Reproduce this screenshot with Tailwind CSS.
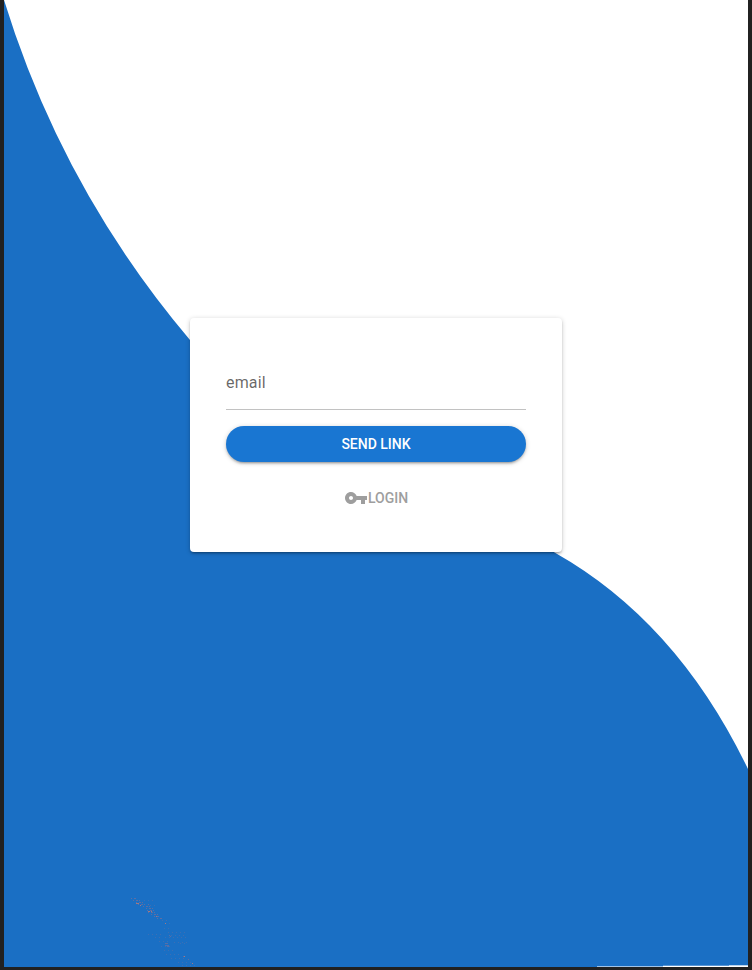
<!DOCTYPE html>
<html lang="en">
<head>
<meta charset="utf-8">
<title>Send link</title>
<script src="https://cdn.jsdelivr.net/npm/@tailwindcss/browser@4"></script>
</head>
<body class="relative h-[970px] w-[752px] overflow-hidden bg-[#212121] font-[Roboto,sans-serif]">
<svg class="absolute inset-0" width="752" height="970" viewBox="0 0 752 970" aria-hidden="true">
  <rect x="4" width="744" height="967" fill="#fff"/>
  <path fill="#1a6fc4" d="M4 0Q62.2 189 190 340L400 460L555 552.7Q677 621.5 748 769V967H4Z"/>
  <path fill="#9fc3e8" d="M597 966h66v1h-66z"/>
  <path fill="#5896d5" d="M663 965h66v1h-66z"/>
  <path fill="#b9d4ee" d="M729 965h19v1h-19z"/>
  <path fill="#fff" d="M663 966h85v1h-85z"/>
  <g stroke="#8b7090" stroke-opacity=".6" fill="none">
    <path stroke-dasharray="1 2 2 1 1 3" d="M131 898.5h5M133 900.5h8M136 902.5h8M138 904.5h11M143 906.5h10M146 908.5h8M147 910.5h9M148 912.5h10M151 914.5h8M154 916.5h6M157 918.5h5"/>
    <path stroke-opacity=".3" stroke-dasharray="1 3" d="M144 900.5h11M150 905.5h8M162 920.5h5M165 923.5h5M164 928.5h8M168 932.5h20M171 935.5h15M148 934.5h14M155 937.5h8M165 937.5h22M159 941.5h10M174 942.5h14M161 946.5h12M180 943.5h8M164 950.5h12M166 954.5h14M171 958.5h15M178 962.5h13M182 965.5h14"/>
    <path stroke-opacity=".55" d="M165 943.5h3M165 945.5h4M167 946.5h2M169 935.5h1M170 936.5h1M183 956.5h2M188 959.5h1"/>
    <path stroke="#b97b78" stroke-opacity=".85" d="M136 903.5h3M140 905.5h1M148 911.5h2M151 911.5h1M156 916.5h1M165 923.5h1M184 956.5h1M192 963.5h1"/>
  </g>
</svg>
<main class="relative flex h-[870px] items-end justify-center pb-[318px]">
  <form class="flex h-[234px] w-[372px] flex-col rounded bg-white px-9 pt-9 shadow-[0_1px_5px_rgba(0,0,0,0.2),0_2px_2px_rgba(0,0,0,0.14),0_3px_1px_-2px_rgba(0,0,0,0.12)]">
    <label class="flex h-14 items-center border-b border-black/24 pt-0.5 text-base leading-6 tracking-[0.15px] text-black/60">email</label>
    <button type="button" class="mt-4 h-9 rounded-full bg-[#1976d2] text-sm font-medium text-white shadow-[0_1px_5px_rgba(0,0,0,0.2),0_2px_2px_rgba(0,0,0,0.14),0_3px_1px_-2px_rgba(0,0,0,0.12)]">SEND LINK</button>
    <button type="button" class="mt-[18px] flex h-9 items-center justify-center text-sm font-medium text-[#9e9e9e]"><svg class="h-6 w-6" viewBox="0 0 24 24" fill="currentColor" aria-hidden="true"><path d="M12.65 10C11.83 7.67 9.61 6 7 6c-3.31 0-6 2.69-6 6s2.69 6 6 6c2.61 0 4.83-1.67 5.65-4H17v4h4v-4h2v-4H12.65zM7 14c-1.1 0-2-.9-2-2s.9-2 2-2 2 .9 2 2-.9 2-2 2z"/></svg>LOGIN</button>
  </form>
</main>
</body>
</html>
